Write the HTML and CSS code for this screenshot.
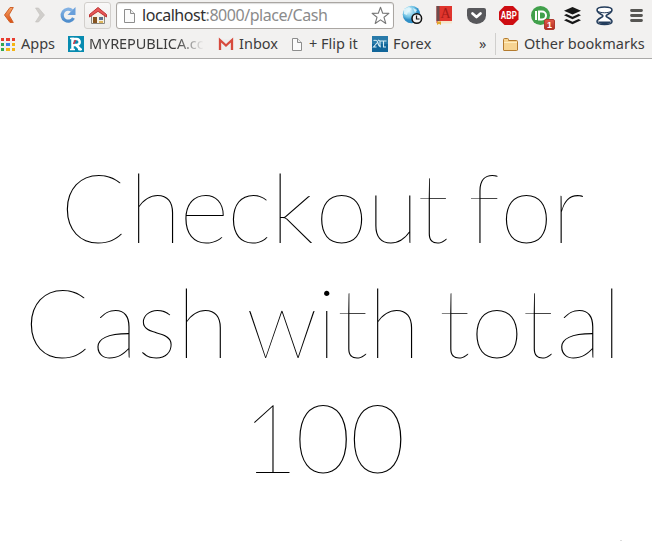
FILE: index.html
```html
<!DOCTYPE html>
<html lang="en">
<head>
<meta charset="utf-8">
<title>Checkout</title>
<link rel="stylesheet" href="styles.css">
</head>
<body>
<header class="chrome">
  <div class="toolbar">
    <svg class="nav" width="84" height="30" viewBox="0 0 84 30">
      <defs>
        <linearGradient id="orange" x2="0" y2="1"><stop stop-color="#f6a467"/><stop offset="1" stop-color="#d94f12"/></linearGradient>
        <linearGradient id="blue" x2="0" y2="1"><stop stop-color="#83b2e4"/><stop offset="1" stop-color="#4f8dcc"/></linearGradient>
      </defs>
      <path d="M10 7.500h3.300L8.900 15l4.400 7.500H10L4.500 15z" fill="url(#orange)" stroke="#d0622b" stroke-width="1"/>
      <path d="M35.500 8h3l6 7-6 7h-3l4.500-7z" fill="#d0cecb" stroke="#c3c1be" stroke-width=".6"/>
      <path d="M72 10.500A6 6 0 1 0 73.500 18" fill="none" stroke="url(#blue)" stroke-width="3.200"/>
      <path d="M75.500 7v8h-8z" fill="#689fdb"/>
    </svg>
    <div class="home">
      <svg width="20" height="20" viewBox="0 0 20 20">
        <path d="M3.500 9.500L10 4l6.500 5.500v8h-13z" fill="#f4f0e6" stroke="#8c8880"/>
        <path d="M5 11h4v6H5z" fill="#86531f"/><path d="M11 11h4v3h-4z" fill="#5c718e"/><path d="M11 15h4v2h-4z" fill="#deb65b"/>
        <path d="M1.500 11V8.500L10 1.500l8.500 7V11L10 5.300z" fill="#e85656" stroke="#bd3434"/>
      </svg>
    </div>
    <div class="address">
      <svg class="page" width="13" height="16" viewBox="0 0 13 16"><path d="M1.500 1.500h6l4 4v9h-10z" fill="#fbfbfb" stroke="#8d8d8d"/><path d="M7.500 1.500v4h4" fill="#eee" stroke="#8d8d8d"/></svg>
      <span class="url">localhost<span class="path">:8000/place/Cash</span></span>
      <svg class="star" width="19" height="19" viewBox="0 0 19 19"><path d="M9.500 1.300l2.200 5.900 6.200.2-4.900 3.900 1.800 6.200-5.300-3.600-5.300 3.600L6 11.300 1.100 7.400l6.200-.2z" fill="#fff" stroke="#777" stroke-width="1.100" stroke-linejoin="round"/></svg>
    </div>
    <svg class="extensions" width="258" height="31" viewBox="0 0 258 31">
      <defs>
        <radialGradient id="globe" cx=".35" cy=".3"><stop stop-color="#e9fbff"/><stop offset=".7" stop-color="#70c3e5"/><stop offset="1" stop-color="#2f8fc6"/></radialGradient>
        <linearGradient id="badge" x2="0" y2="1"><stop stop-color="#e35a48"/><stop offset="1" stop-color="#b12c22"/></linearGradient>
      </defs>
      <circle cx="17.500" cy="14.500" r="8.800" fill="url(#globe)"/>
      <path d="M10 9l5-2 3 2-4 3-1 3-3-1zM19 8l4 2-2 3z" fill="#e6f8fc" opacity=".8"/>
      <circle cx="22.800" cy="18.500" r="4.800" fill="#f2f2f2" stroke="#111" stroke-width="1.500"/><path d="M22.500 15.500V19h3" fill="none" stroke="#111" stroke-width="1.200"/>
      <path d="M42.500 6h15.500v15h-14l-1.500 2.500z" fill="#e0352d"/><path d="M42.500 6h3v15h-3z" fill="#6d4d4d"/><path d="M44 21h14v2.500H44z" fill="#f5e6cb"/><path d="M43 21.500h4V25l-2-1.300L43 25z" fill="#e2a72b"/>
      <text x="51.500" y="18" class="dictionary">A</text>
      <path d="M75 8q-2 0-2 2v5.500a9.500 8.500 0 0 0 19 0V10q0-2-2-2z" fill="#58585b"/><path d="M78.500 13.500l4 3.500 4-3.500" fill="none" stroke="#fff" stroke-width="2.700" stroke-linecap="round" stroke-linejoin="round"/>
      <path d="M110.500 6h8.500l5.500 5.500v8l-5.500 5.500h-8.500l-5.500-5.500v-8z" fill="#ce0d12"/><text x="114.700" y="19" class="abp" textLength="16" lengthAdjust="spacingAndGlyphs">ABP</text>
      <circle cx="146.500" cy="15.500" r="9.500" fill="#41a04b"/><path d="M142 11v9" stroke="#fff" stroke-width="2"/><path d="M145 11.500h3a4 4 0 0 1 0 8h-3z" fill="none" stroke="#fff" stroke-width="2"/>
      <rect x="150.500" y="19.500" width="10" height="10" rx="1.500" fill="url(#badge)" stroke="#ad3a2e"/><text x="155.500" y="28" class="count">1</text>
      <path d="M178.500 7l8.500 3.700-8.500 3.800-8.500-3.800z" fill="#171717"/><path d="M170 15.200l2.500-1.100 6 2.700 6-2.700 2.500 1.100-8.500 4z" fill="#171717"/><path d="M170 20.200l2.500-1.100 6 2.700 6-2.700 2.500 1.100-8.500 4z" fill="#171717"/>
      <path d="M203 10c0 3.500 6 4.500 6 6s-6 2.500-6 5.500c0 4 15 4 15 0 0-3-6-4-6-5.500s6-2.500 6-6c0-4-15-4-15 0z" fill="#fff" stroke="#243d5c" stroke-width="1.500"/>
      <path d="M203.500 10.500c1 3 13 3 14 0" fill="none" stroke="#243d5c" stroke-width="1"/>
      <path d="M204 21.500h13c0 3.500-13 3.500-13 0z" fill="#243d5c"/>
      <path d="M237.500 10.500h10M237.500 15.500h10M237.500 20.500h10" stroke="#575653" stroke-width="2.800" stroke-linecap="round"/>
    </svg>
  </div>
  <nav class="bookmarks">
    <span class="mark apps">
      <svg width="14" height="14" viewBox="0 0 14 14"><path d="M0 1h3v3H0zM5 1h4v3H5zM11 1h3v3h-3z" fill="#e83c30"/><path d="M0 6h3v3H0z" fill="#31a853"/><path d="M5 6h4v3H5z" fill="#3e82ed"/><path d="M11 6h3v3h-3zM5 11h4v3H5zM11 11h3v3h-3z" fill="#f5b514"/><path d="M0 11h3v3H0z" fill="#31a853"/></svg>
      <span class="label">Apps</span>
    </span>
    <span class="mark republica">
      <svg width="16" height="16" viewBox="0 0 16 16"><path d="M0 0h16v16H0z" fill="#078bb0"/><path d="M4.500 14V3h4.200a3 3 0 0 1 0 6H5M8 9l5 5" fill="none" stroke="#fff" stroke-width="2.500"/><path d="M2 2.500h4M2 13.500h5M10 13.500h4" stroke="#fff" stroke-width="1.400"/><path d="M7.500 4l-2 4" stroke="#db3545" stroke-width="1.500"/></svg>
      <span class="label">MYREPUBLICA.cc</span>
    </span>
    <span class="mark inbox">
      <svg width="16" height="14" viewBox="0 0 16 14"><path d="M1 2h14v11H1z" fill="#eee"/><path d="M2 13V3l6 5.500L14 3v10" fill="none" stroke="#d74a3d" stroke-width="2.300"/></svg>
      <span class="label">Inbox</span>
    </span>
    <span class="mark flip">
      <svg width="12" height="15" viewBox="0 0 12 15"><path d="M1.500 1.500h5l4 4v8h-9z" fill="#fbfbfb" stroke="#8d8d8d"/><path d="M6.500 1.500v4h4" fill="#eee" stroke="#8d8d8d"/></svg>
      <span class="label">+ Flip it</span>
    </span>
    <span class="mark forex">
      <svg width="16" height="16" viewBox="0 0 16 16"><path d="M0 0h16v16H0z" fill="#12669a"/><path d="M0 0h16v8H0z" fill="#287aa9"/><path d="M1.500 4.500q4-1 4.500 2.500t3 4M5.500 6.500l-4 4.500h3M8 11V5l-2-1M8 5h6.500M11.500 5v6h2.500" fill="none" stroke="#d8edf5" stroke-width="1.100"/></svg>
      <span class="label">Forex</span>
    </span>
    <span class="more">»</span>
    <span class="mark other">
      <svg width="17" height="15" viewBox="0 0 17 15"><path d="M1.500 13V2.500q0-1 1-1h3q1 0 1 1v1h8q1 0 1 1V13q0 .5-1 .5H2q-.5 0-.5-.5z" fill="#f7d492" stroke="#b47b2e"/><path d="M2 5.500h13" stroke="#ffedbf"/></svg>
      <span class="label">Other bookmarks</span>
    </span>
  </nav>
</header>
<main>
  <h1>
    <span class="line first"><span class="wider">C</span><span class="tight">he</span><span class="snug">c</span><span class="loose">k</span><span class="snug">o</span><span class="tight">u</span>t<span class="gap"> </span>f<span class="snug">o</span>r</span>
    <span class="line second"><span class="wide">C</span><span class="snug">a</span>s<span class="snug">h</span><span class="wordgap"> </span><span class="snug">w</span>it<span class="snug">h</span><span class="gap"> </span>t<span class="snug">o</span><span class="wide">t</span>al</span>
    <span class="line third"><span class="digit">1</span><span class="snug">0</span>0</span>
  </h1>
</main>
<i class="speck"></i>
</body>
</html>
```

FILE: styles.css
```css
* { box-sizing: border-box; }
body { margin: 0; background: #fff; overflow: hidden; }
svg { display: block; flex: none; }
.chrome { height: 59px; background: #f2f1f0; border-bottom: 1px solid #aaa9a8; font-family: "Noto Sans", sans-serif; color: #3c3c3c; }
.toolbar { height: 31px; display: flex; align-items: flex-start; }
.home { width: 27px; height: 27px; margin-top: 2px; border: 1px solid #d2cfcc; border-radius: 3px; background: linear-gradient(#f9f8f8, #eeedeb); display: grid; place-items: center; }
.address { width: 278px; height: 27px; margin: 2px 0 0 5px; padding: 0 3px 0 6px; display: flex; align-items: center; border: 1px solid #aaa6a2; border-radius: 3px; background: #fff; box-shadow: inset 0 1px 1px #ddd; }
.url { margin-left: 6px; font-size: 16px; line-height: 25px; letter-spacing: -.45px; color: #303030; white-space: nowrap; }
.path { color: #8b8b8b; }
.star { margin-left: auto; }
.extensions { margin-left: auto; }
.dictionary { font: 14px "Liberation Serif", serif; fill: #a51b18; text-anchor: middle; }
.abp { font: bold 10px "Liberation Sans", sans-serif; fill: #fff; text-anchor: middle; }
.count { font: bold 9px "Liberation Sans", sans-serif; fill: #fff; text-anchor: middle; }
.bookmarks { height: 26px; display: flex; align-items: center; font-size: 14.5px; line-height: 24px; white-space: nowrap; }
.label { position: relative; top: -1px; }
.mark { display: flex; align-items: center; gap: 5px; flex: none; }
.apps { width: 68px; padding-left: 1px; gap: 6px; }
.republica { width: 150px; }
.republica .label { letter-spacing: -.1px; -webkit-mask-image: linear-gradient(to right, #000 76%, transparent); mask-image: linear-gradient(to right, #000 76%, transparent); }
.inbox { width: 73px; }
.flip { width: 81px; gap: 6px; }
.forex { width: 107px; letter-spacing: .2px; }
.more { width: 16px; position: relative; top: -1px; }
.other { border-left: 1px solid #d0cfcd; height: 22px; padding-left: 6px; letter-spacing: .05px; }
main { padding-top: 89px; }
h1 { margin: 0; font: 100 96px/115.2px Lato, sans-serif; color: #000; text-align: center; }
.line { display: block; white-space: nowrap; }
.first { padding-right: 7px; }
.second { padding-right: 6px; }
.third { padding-right: 4px; }
.wider { letter-spacing: 3.5px; }
.wide { letter-spacing: 2.5px; }
.loose { letter-spacing: 1.5px; }
.snug { letter-spacing: -1px; }
.tight { letter-spacing: -2px; }
.gap { letter-spacing: -8px; }
.wordgap { letter-spacing: -9.5px; }
.digit { letter-spacing: -3px; }
.speck { position: absolute; left: 620px; top: 540px; width: 2px; height: 1px; background: #ddd; }
```
